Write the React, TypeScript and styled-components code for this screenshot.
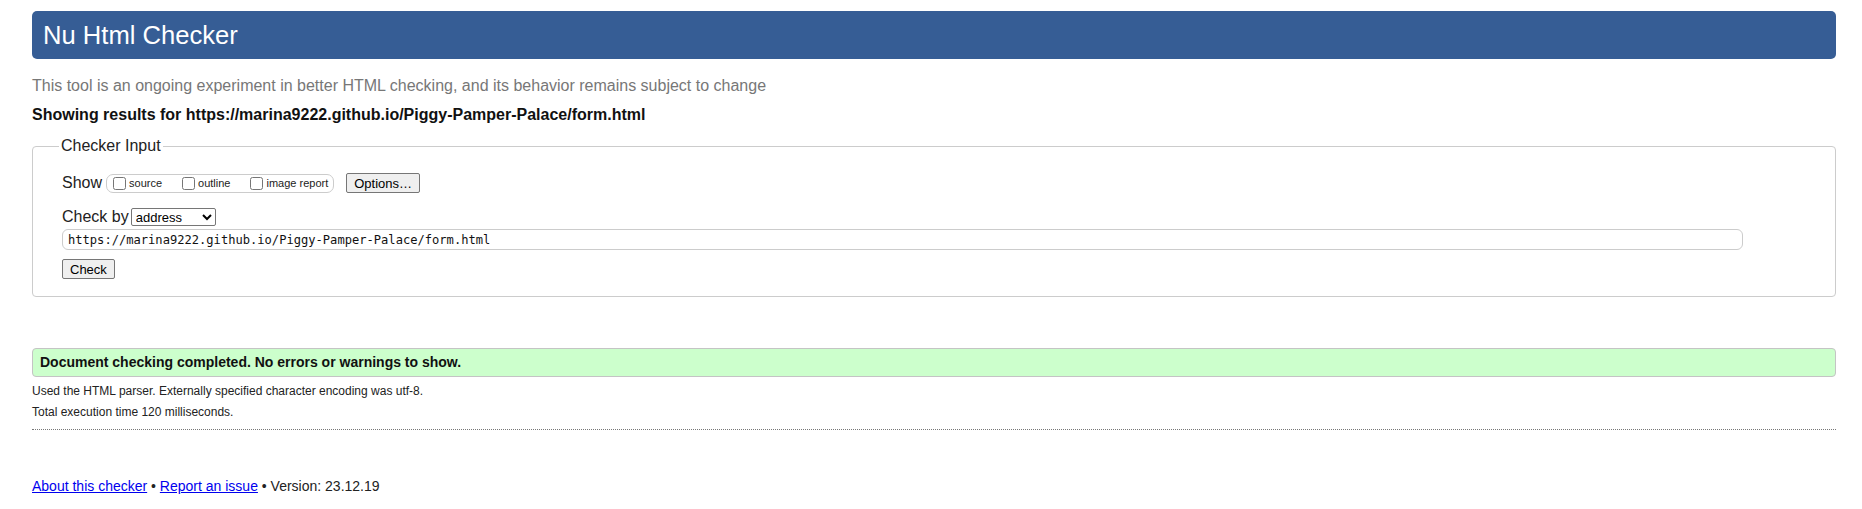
import React from 'react'
import styled, { createGlobalStyle } from 'styled-components'

const GlobalStyle = createGlobalStyle`
  html, body {
    margin: 0;
    padding: 0;
    background: #fff;
  }

  body {
    font-family: Arial, "Liberation Sans", sans-serif;
    color: #000;
  }
`;

const Page = styled.div`
  padding: 11px 26px 0 32px;
`;

const Title = styled.h1`
  margin: 0;
  height: 48px;
  line-height: 48px;
  padding: 0 11px;
  background: #365d95;
  color: #fff;
  font-size: 25.6px;
  font-weight: normal;
  border-radius: 5px;
`;

const Intro = styled.p`
  margin: 18px 0 0;
  font-size: 16px;
  line-height: 18px;
  color: #777;
`;

const Target = styled.p`
  margin: 11px 0 0;
  font-size: 16px;
  line-height: 18px;
  font-weight: bold;
  color: #111;
`;

const InputBox = styled.fieldset`
  margin: 13px 0 0;
  padding: 18px 29px 17px;
  border: 1px solid #ccc;
  border-radius: 4px;
  min-width: 0;
`;

const Legend = styled.legend`
  margin-left: -3px;
  padding: 0 2px;
  font-size: 16px;
  line-height: 18px;
  color: #222;
`;

const Row = styled.div<{ $top?: number }>`
  display: flex;
  align-items: center;
  gap: 4px;
  margin-top: ${p => p.$top ?? 0}px;
  font-size: 16px;
  color: #222;
`;

const ShowGroup = styled.div`
  display: flex;
  align-items: center;
  gap: 16px;
  height: 19px;
  box-sizing: border-box;
  padding: 0 5px 0 2px;
  border: 1px solid #ccc;
  border-radius: 7px;
`;

const OptionLabel = styled.label`
  display: inline-flex;
  align-items: center;
  font-size: 11px;
  color: #222;
`;

const Checkbox = styled.input`
  width: 13px;
  height: 13px;
  margin: 0 3px 0 4px;
`;

const Button = styled.button<{ $gap?: number }>`
  height: 20px;
  margin-left: ${p => p.$gap ?? 0}px;
  padding: 0 7px;
  font-family: Arial, "Liberation Sans", sans-serif;
  font-size: 13px;
  color: #000;
  background: #efefef;
  border: 1px solid #767676;
  border-radius: 2px;
`;

const Select = styled.select`
  width: 85px;
  height: 18px;
  margin-left: -2px;
  font-family: Arial, "Liberation Sans", sans-serif;
  font-size: 13px;
  color: #000;
  background: #fff;
  border: 1px solid #767676;
  border-radius: 2px;
`;

const UrlField = styled.input`
  display: block;
  width: calc(100% - 63px);
  height: 21px;
  box-sizing: border-box;
  margin-top: 3px;
  padding: 0 5px;
  font-family: "DejaVu Sans Mono", "Liberation Mono", monospace;
  font-size: 12.1px;
  color: #111;
  border: 1px solid #ccc;
  border-radius: 6px;
`;

const CheckLine = styled.div`
  margin-top: 9px;
`;

const Success = styled.div`
  margin-top: 51px;
  padding: 5px 7px;
  font-size: 14px;
  line-height: 17px;
  font-weight: bold;
  color: #111;
  background: #ccffcc;
  border: 1px solid #c4c4c4;
  border-radius: 4px;
`;

const Notes = styled.div`
  margin-top: 4px;
  padding-bottom: 6px;
  border-bottom: 1px dotted #777;
`;

const Note = styled.p`
  margin: 0;
  font-size: 12px;
  line-height: 21px;
  color: #222;
`;

const Footer = styled.p`
  margin: 48px 0 0;
  font-size: 14px;
  line-height: 16px;
  color: #222;
`;

const FooterLink = styled.a`
  color: #0000ee;
  text-decoration: underline;
`;

const App: React.FC = () => {
  const url = 'https://marina9222.github.io/Piggy-Pamper-Palace/form.html'

  return (
    <>
      <GlobalStyle />
      <Page>
        <Title>Nu Html Checker</Title>
        <Intro>
          This tool is an ongoing experiment in better HTML checking, and its behavior remains subject to change
        </Intro>
        <Target>Showing results for {url}</Target>

        <InputBox>
          <Legend>Checker Input</Legend>

          <Row>
            Show
            <ShowGroup>
              <OptionLabel>
                <Checkbox type="checkbox" />
                source
              </OptionLabel>
              <OptionLabel>
                <Checkbox type="checkbox" />
                outline
              </OptionLabel>
              <OptionLabel>
                <Checkbox type="checkbox" />
                image report
              </OptionLabel>
            </ShowGroup>
            <Button type="button" $gap={8}>Options…</Button>
          </Row>

          <Row $top={15}>
            Check by
            <Select defaultValue="address">
              <option value="address">address</option>
              <option value="file">file upload</option>
              <option value="text">text input</option>
            </Select>
          </Row>

          <UrlField type="url" defaultValue={url} />

          <CheckLine>
            <Button type="submit">Check</Button>
          </CheckLine>
        </InputBox>

        <Success>Document checking completed. No errors or warnings to show.</Success>

        <Notes>
          <Note>Used the HTML parser. Externally specified character encoding was utf-8.</Note>
          <Note>Total execution time 120 milliseconds.</Note>
        </Notes>

        <Footer>
          <FooterLink href="#about">About this checker</FooterLink>
          {' • '}
          <FooterLink href="#issue">Report an issue</FooterLink>
          {' • Version: 23.12.19'}
        </Footer>
      </Page>
    </>
  )
}

export default App
